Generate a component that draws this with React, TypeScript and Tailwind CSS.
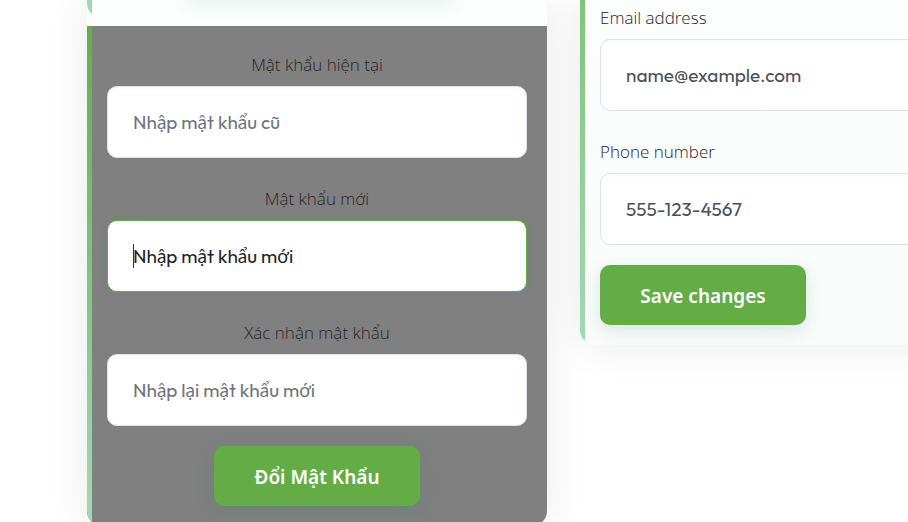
import React from "react";

type FieldProps = {
  id: string;
  label: string;
  type?: string;
  placeholder?: string;
  defaultValue?: string;
  tone?: "muted" | "active";
  centered?: boolean;
};

const inputBase =
  "block h-[72px] w-full rounded-[10px] border bg-white px-[25px] font-['Outfit','Lato',sans-serif] text-[19px] text-[#495057] outline-none";

function Field({ id, label, type = "text", placeholder, defaultValue, tone = "muted", centered }: FieldProps) {
  const active = tone === "active";
  return (
    <div className={centered ? "text-center" : ""}>
      <label htmlFor={id} className="mb-2 block font-['Open_Sans','Noto_Sans',sans-serif] text-[17px] font-light leading-[27px] text-[#262626]">
        {label}
      </label>
      <div className="relative">
        <input
          id={id}
          type={type}
          placeholder={placeholder}
          defaultValue={defaultValue}
          className={
            active
              ? `${inputBase} border-[#64ac46] placeholder:text-[#212529] shadow-[0_0_6px_rgba(80,140,120,0.35)]`
              : `${inputBase} border-[#dfe3ee] placeholder:text-[#6c757d] shadow-[inset_0_1px_4px_rgba(0,0,0,0.03)]`
          }
        />
        {active && <span className="absolute left-[26px] top-6 h-6 w-px bg-[#333]" />}
      </div>
    </div>
  );
}

function GreenButton({ children }: { children: React.ReactNode }) {
  return (
    <button
      type="submit"
      className="mt-5 h-[60px] min-w-[206px] rounded-[10px] bg-[#64ac46] px-8 pt-[3px] text-[19px] font-semibold text-white shadow-[0_5px_18px_rgba(20,130,100,0.16)]"
    >
      {children}
    </button>
  );
}

export default function App() {
  return (
    <main className="flex h-screen items-start gap-[33px] overflow-hidden bg-white pl-[87px] font-['Noto_Sans','Open_Sans',sans-serif]">
      <section className="w-[460px] shrink-0 rounded-b-[15px] bg-[#fcfdfd] shadow-[0_0_40px_rgba(0,0,0,0.09)]">
        <div className="flex h-[26px] flex-col items-start overflow-hidden">
          <div className="flex h-[18px] w-full shrink-0 items-start overflow-hidden rounded-b-[15px]">
            <div className="h-full w-[5px] shrink-0 bg-[#9fd9b2]" />
            <div className="mx-auto h-0 w-[260px] shadow-[0_0_16px_3px_rgba(20,130,100,0.17)]" />
          </div>
        </div>
        <form className="flex overflow-hidden rounded-b-[15px] bg-[#808080]">
          <div className="w-[5px] shrink-0 bg-linear-to-b from-[#64ac46] to-[#a0dab4]" />
          <div className="flex-1 pb-5 pl-[15px] pr-5 pt-[25px] text-center">
            <div className="grid gap-[27px]">
              <Field centered id="current" label="Mật khẩu hiện tại" type="password" placeholder="Nhập mật khẩu cũ" />
              <Field centered id="next" label="Mật khẩu mới" type="password" placeholder="Nhập mật khẩu mới" tone="active" />
              <Field centered id="confirm" label="Xác nhận mật khẩu" type="password" placeholder="Nhập lại mật khẩu mới" />
            </div>
            <GreenButton>Đổi Mật Khẩu</GreenButton>
          </div>
        </form>
      </section>

      <section className="min-w-[460px] flex-1 rounded-b-[15px] shadow-[0_0_40px_rgba(0,0,0,0.09)]">
        <form className="flex overflow-hidden rounded-b-[15px] bg-linear-to-b from-[#fcfdfd] to-[#fafbfb]">
          <div className="w-[5px] shrink-0 bg-linear-to-b from-[#82c37c] to-[#a0dab4]" />
          <div className="flex-1 px-[15px] pb-5 pt-1">
            <div className="grid gap-[27px]">
              <Field id="email" label="Email address" type="email" defaultValue="name@example.com" />
              <Field id="phone" label="Phone number" type="tel" defaultValue="555-123-4567" />
            </div>
            <GreenButton>Save changes</GreenButton>
          </div>
        </form>
      </section>
    </main>
  );
}
